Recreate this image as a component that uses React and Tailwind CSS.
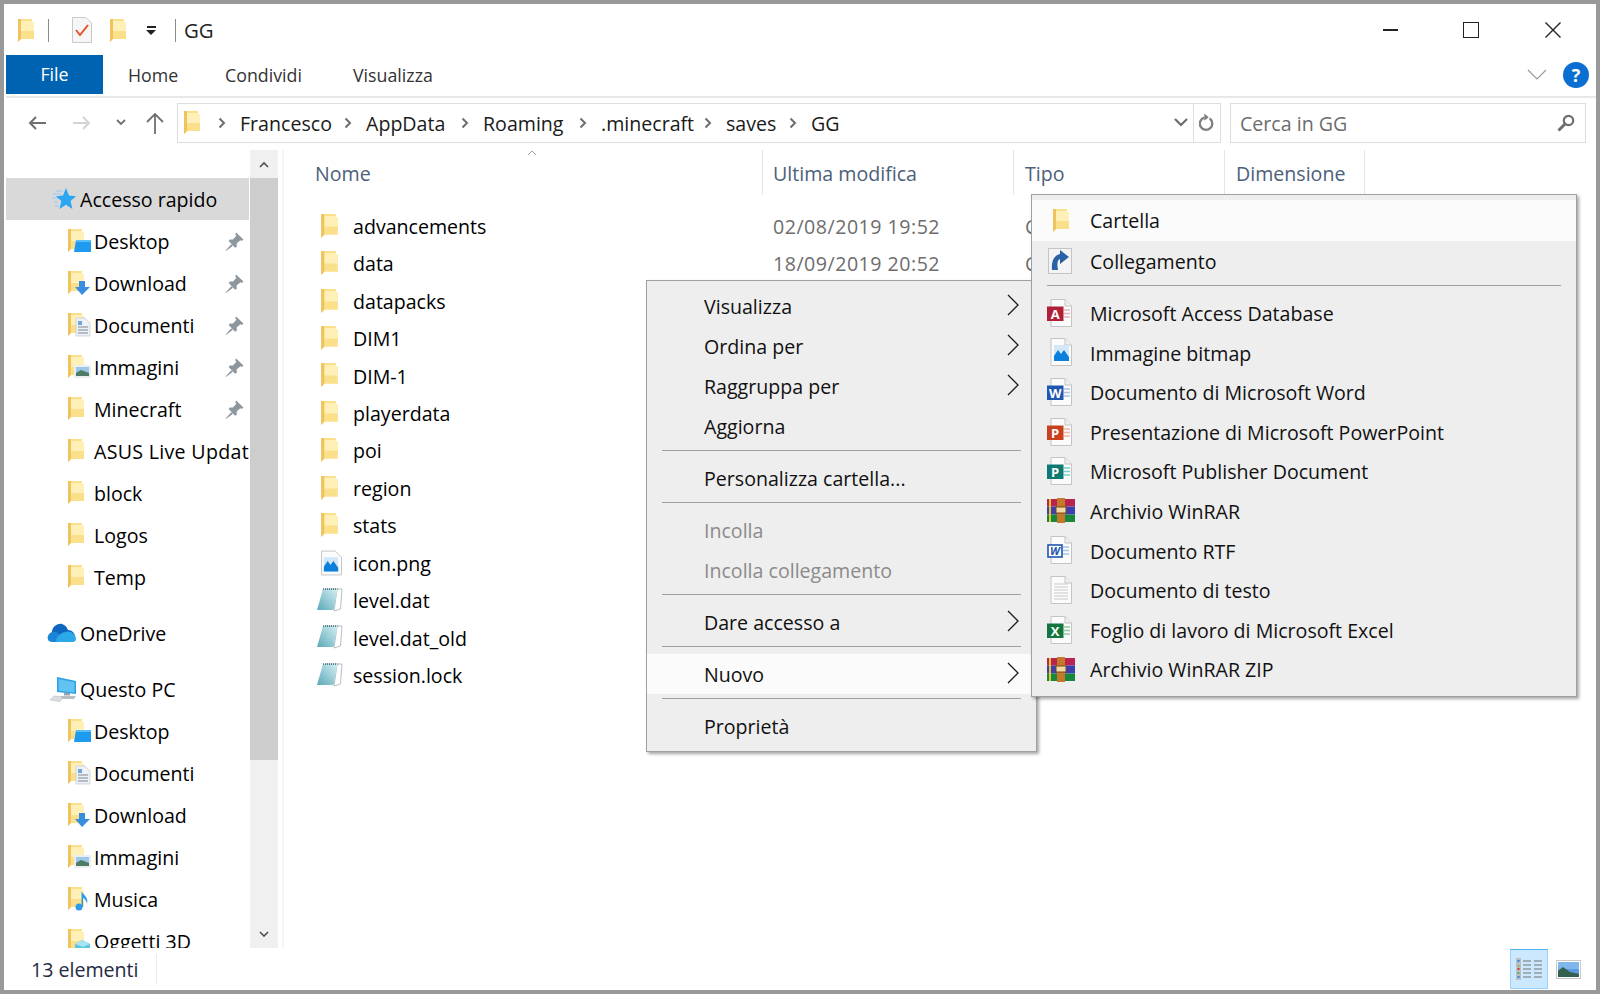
import React from 'react';

const FONT = "font-['Open_Sans','Noto_Sans',sans-serif]";

function FolderShape() {
  return (
    <>
      <path d="M0 0H14V3H16V20H3L0 23Z" fill="#fbe08c" />
      <path d="M3 2H14V3H16V12H3Z" fill="#fff0b8" />
      <path d="M0 0H3V20L0 23Z" fill="#efc45f" />
    </>
  );
}

// plain yellow folder
function Folder({ className = 'w-4 h-[23px]' }) {
  return (
    <svg viewBox="0 0 16 23" className={className}>
      <FolderShape />
    </svg>
  );
}

// folder with a small badge in the corner, used in the sidebar
function BadgeFolder({ kind }) {
  return (
    <svg viewBox="0 0 24 24" className="w-6 h-6 shrink-0">
      <FolderShape />
      {kind === 'desktop' && (
        <>
          <path d="M8 11H23V23H6Z" fill="#1e9bf0" />
          <path d="M8 11H23V13H8Z" fill="#58bdf7" />
        </>
      )}
      {kind === 'download' && <path d="M11 10H17V16H22L14 24L7 16H11Z" fill="#3a8ee0" />}
      {kind === 'docs' && (
        <>
          <path d="M8 5H17L22 10V23H8Z" fill="#eef1f5" stroke="#c3c8cf" strokeWidth="0.7" />
          <path d="M10 8H14V12H10Z" fill="#6ea8dc" />
          <path d="M10 14H20M10 17H20M10 20H20" stroke="#7d8792" strokeWidth="1" />
        </>
      )}
      {kind === 'pics' && (
        <>
          <path d="M6 10H23V23H6Z" fill="#eceff2" />
          <path d="M8 12H21V21H8Z" fill="#9cc7e8" />
          <path d="M8 18L13 15L21 18V21H8Z" fill="#4f7a63" />
        </>
      )}
      {kind === 'music' && (
        <>
          <circle cx="11" cy="20" r="3.5" fill="#2e9bea" />
          <path d="M13.5 20V4C15 8 21 10 19 17C18.5 13 16 11.5 15 11V20Z" fill="#2e9bea" />
        </>
      )}
      {kind === '3d' && (
        <>
          <path d="M7 15L14 11L22 15V23H7Z" fill="#59c6de" />
          <path d="M7 15L14 11L22 15L15 18Z" fill="#a8e4f0" />
        </>
      )}
    </svg>
  );
}

function Pin() {
  return (
    <svg viewBox="0 0 18 18" className="w-[19px] h-[19px] shrink-0">
      <path d="M10.5 0.5L17.5 7L15.8 8.5L14.6 7.8L11 11L11.2 14L9.5 15L3.5 8.5L4.6 7L7.5 7.2L10.8 3.6L9.6 2.2Z" fill="#8e969d" />
      <path d="M6 11.5L0.5 17.5L1.2 17.8L7.5 13Z" fill="#8e969d" />
    </svg>
  );
}

function Star() {
  return (
    <svg viewBox="0 0 24 22" className="w-6 h-[22px] shrink-0">
      <path d="M4 3H11M1 6H9M0 10H6M2 14H6M3 18H7" stroke="#8fcdf6" strokeWidth="1" />
      <path d="M14 0L17 7.5L24 8.2L18.6 13L20.4 21L14 16.8L7.5 21L9.3 13L4 8.2L11 7.5Z" fill="#2ba6f2" />
    </svg>
  );
}

function Cloud() {
  return (
    <svg viewBox="0 0 29 20" className="w-[29px] h-5 shrink-0">
      <path d="M5 8C6 3 11 0 15 1C18 2 20 4 21 7C25 7 28 10 28 14H5Z" fill="#0e66c0" />
      <path d="M5 19C1 19 0 15 1 13C2 10 5 8 9 9L17 14L21 19Z" fill="#1b84d6" />
      <path d="M10 19C7 16 13 10 18 9C23 7 29 11 29 16C29 18 27 19 26 19Z" fill="#2ba8e8" />
    </svg>
  );
}

function Computer() {
  return (
    <svg viewBox="0 0 26 25" className="w-[26px] h-[25px] shrink-0">
      <path d="M7 0L26 4V17L7 15Z" fill="#2f9fe6" />
      <path d="M8.5 2L24.5 5.3V15.5L8.5 13.8Z" fill="#62c3f3" />
      <path d="M14 16H20V18.5H14Z" fill="#9aa3ab" />
      <path d="M11 19H26L24 22H9Z" fill="#b9bec4" />
      <path d="M4 19L13 20L10 24.5L0 23Z" fill="#dadde0" stroke="#aeb3b8" strokeWidth="0.5" />
    </svg>
  );
}

function PageBase({ children }) {
  return (
    <svg viewBox="0 0 26 28" className="w-[26px] h-[28px]">
      <path d="M4 0.5H18L24.5 7V27.5H4Z" fill="#fbfbfb" stroke="#c4c4c4" />
      <path d="M18 0.5V7H24.5" fill="#efefef" stroke="#c4c4c4" />
      {children}
    </svg>
  );
}

function OfficeIcon({ color, letter, light }) {
  return (
    <PageBase>
      <path d="M17 11H23M17 14.5H23M17 18H23" stroke={light} strokeWidth="1.6" />
      <rect x="0" y="7.5" width="16.5" height="14.5" fill={color} />
      <text x="8.2" y="19.5" textAnchor="middle" fontSize="13" fontWeight="700" fontFamily="Open Sans, sans-serif" fill="#fff">
        {letter}
      </text>
    </PageBase>
  );
}

function BitmapIcon() {
  return (
    <PageBase>
      <rect x="7" y="7" width="15" height="16" fill="#d2e8fa" />
      <path d="M7 23V18L11 12L14 16L17 12L22 19V23Z" fill="#0a7fdc" />
    </PageBase>
  );
}

function RtfIcon() {
  return (
    <PageBase>
      <path d="M16 11H22M16 14.5H22M16 18H22" stroke="#a9c4e8" strokeWidth="1.6" />
      <rect x="1" y="9" width="14" height="12" fill="#fff" stroke="#1f56b0" strokeWidth="1.6" />
      <text x="8" y="19" textAnchor="middle" fontSize="11" fontWeight="700" fontStyle="italic" fontFamily="Open Sans, sans-serif" fill="#1f56b0">
        W
      </text>
    </PageBase>
  );
}

function TextIcon() {
  return (
    <PageBase>
      <path d="M7 8H21M7 11H21M7 14H21M7 17H21M7 20H21M7 23H21" stroke="#c9c9c9" strokeWidth="1.2" />
    </PageBase>
  );
}

function ShortcutIcon() {
  return (
    <svg viewBox="0 0 26 28" className="w-[26px] h-[28px]">
      <rect x="1.5" y="1.5" width="23" height="25" fill="#f4f4f4" stroke="#c4c4c4" />
      <path d="M5 23C4 13 8 8 13 7V3L22 10L13 17V12C10 13 10 18 11 23Z" fill="#2a62a8" />
    </svg>
  );
}

function RarIcon() {
  return (
    <svg viewBox="0 0 28 25" className="w-7 h-[25px]">
      <rect x="0" y="1" width="28" height="7.5" fill="#b9234f" />
      <rect x="0" y="8.5" width="28" height="8" fill="#3b3fb0" />
      <rect x="0" y="16.5" width="28" height="7.5" fill="#17873c" />
      <rect x="2" y="1" width="2" height="23" fill="#e9c62f" />
      <rect x="10" y="0" width="8" height="25" fill="#c4792a" />
      <rect x="9" y="9" width="10" height="6" fill="#f0d9a8" stroke="#7c4a14" />
    </svg>
  );
}

function NotepadIcon() {
  return (
    <svg viewBox="0 0 26 24" className="w-[26px] h-6">
      <defs>
        <linearGradient id="padCover" x1="0" y1="1" x2="1" y2="0">
          <stop offset="0" stopColor="#5aa8b8" />
          <stop offset="1" stopColor="#d6f0f4" />
        </linearGradient>
      </defs>
      <path d="M8 1H25L23.5 21L17 23L20 2Z" fill="#fff" stroke="#9aa5aa" strokeWidth="0.7" />
      <path d="M6 1H20.5L16.5 22H0Z" fill="url(#padCover)" />
      <path d="M6 1.2H20.5" stroke="#4c7a86" strokeWidth="1.8" strokeDasharray="1 1" />
    </svg>
  );
}

function MenuArrow() {
  return (
    <svg viewBox="0 0 12 22" className="w-3 h-[22px]">
      <path d="M1 1L11 11L1 21" fill="none" stroke="#1c1c1c" strokeWidth="1.3" />
    </svg>
  );
}

function Crumb({ label, width }) {
  return (
    <div className="flex items-center shrink-0" style={{ width }}>
      <svg viewBox="0 0 8 12" className="w-2 h-3 shrink-0">
        <path d="M1.5 1.5L6 6L1.5 10.5" fill="none" stroke="#6d6d6d" strokeWidth="2" />
      </svg>
      <span className="ml-[14px] pt-[2px] text-[#1a1a1a]">{label}</span>
    </div>
  );
}

function SideRow({ icon, label, pinned, wide }) {
  return (
    <div className="flex items-center h-[42px] shrink-0 pl-[62px]">
      {icon}
      <span className={`ml-[2px] pt-[2px] whitespace-nowrap text-black ${wide ? 'tracking-[0.3px]' : ''}`}>{label}</span>
      {pinned && (
        <div className="ml-auto mr-[5px]">
          <Pin />
        </div>
      )}
    </div>
  );
}

function SideRoot({ icon, label, active }) {
  return (
    <div className={`flex items-center h-[42px] shrink-0 ${active ? 'bg-[#d9d9d9]' : ''}`}>
      <div className="flex justify-end shrink-0 w-[70px]">{icon}</div>
      <span className="ml-[4px] pt-[2px] whitespace-nowrap text-black">{label}</span>
    </div>
  );
}

function FileRow({ icon, name, date }) {
  return (
    <div className="flex items-center h-[37.43px] shrink-0">
      <div className="w-[33px] flex justify-start shrink-0">{icon}</div>
      <span className="w-[420px] pt-[2px] shrink-0 text-black">{name}</span>
      {date && <span className="w-[252px] pt-[2px] shrink-0 text-[#6d6d6d] tracking-[0.5px]">{date}</span>}
      {date && <span className="text-[#6d6d6d] pt-[2px] whitespace-nowrap">Cartella di file</span>}
    </div>
  );
}

function MenuItem({ label, arrow, disabled, active }) {
  return (
    <div className={`flex items-center h-[40px] pl-[57px] pr-[17px] ${active ? 'bg-[#fbfbfb]' : ''}`}>
      <span className={`pt-[2px] ${disabled ? 'text-[#8b8b8b]' : 'text-[#111]'}`}>{label}</span>
      {arrow && (
        <div className="ml-auto flex mb-[3px]">
          <MenuArrow />
        </div>
      )}
    </div>
  );
}

function Sep() {
  return (
    <div className="h-[12px] pt-[4px]">
      <div className="h-px bg-[#a0a0a0] mx-[15px]" />
    </div>
  );
}

function NewItem({ icon, label, active, tall }) {
  return (
    <div className={`flex items-center pl-[15px] ${tall ? 'h-[40.5px]' : 'h-[39.6px]'} ${active ? 'bg-[#fbfbfb]' : ''}`}>
      <div className="w-[43px] shrink-0 flex">{icon}</div>
      <span className="pt-[2px] text-[#111] whitespace-nowrap">{label}</span>
    </div>
  );
}

const FILES = [
  ['advancements', '02/08/2019 19:52'],
  ['data', '18/09/2019 20:52'],
  ['datapacks'],
  ['DIM1'],
  ['DIM-1'],
  ['playerdata'],
  ['poi'],
  ['region'],
  ['stats'],
];

export default function App() {
  const pageIcon = (
    <div className="ml-[1px]">
      <svg viewBox="0 0 22 26" className="w-[21px] h-[26px]">
        <path d="M0.5 0.5H15L21.5 7V25.5H0.5Z" fill="#fbfbfb" stroke="#c4c4c4" />
        <rect x="3" y="7" width="15" height="15" fill="#d2e8fa" />
        <path d="M3 22V17L7 11L10 15L13 11L18 18V22Z" fill="#0a7fdc" />
      </svg>
    </div>
  );
  const padIcon = (
    <div className="ml-[-3px]">
      <NotepadIcon />
    </div>
  );

  return (
    <div className={`relative w-[1600px] h-[994px] bg-[#999999] p-1 overflow-hidden text-[19.6px] leading-none ${FONT}`}>
      <div className="flex flex-col w-full h-full bg-white">
        {/* title bar */}
        <div className="flex items-center h-[51px] shrink-0 pl-[14px] pt-[1px]">
          <Folder />
          <div className="ml-[14px] w-px h-[23px] bg-[#8a8a8a]" />
          <div className="ml-[23px]">
            <svg viewBox="0 0 20 26" className="w-5 h-[26px]">
              <path d="M0.5 0.5H14L19.5 6V25.5H0.5Z" fill="#f6f6f6" stroke="#c9c9c9" />
              <path d="M4 13L8 18L16 8" fill="none" stroke="#e8502a" strokeWidth="2" />
            </svg>
          </div>
          <div className="ml-[18px]">
            <Folder />
          </div>
          <div className="ml-[20px] flex flex-col items-center gap-[2px]">
            <div className="w-[9px] h-[2px] bg-[#222]" />
            <div className="w-0 h-0 border-x-[5px] border-x-transparent border-t-[5px] border-t-[#222]" />
          </div>
          <div className="ml-[19px] w-px h-[23px] bg-[#8a8a8a]" />
          <span className="ml-2 text-[#222] text-[20.4px]">GG</span>
          <div className="ml-auto flex items-center pr-[35px]">
            <div className="w-[15px] h-[2px] bg-[#222]" />
            <div className="ml-[65px] w-4 h-4 border-[1.5px] border-[#222]" />
            <svg viewBox="0 0 16 16" className="ml-[66px] w-4 h-4">
              <path d="M0.5 0.5L15.5 15.5M15.5 0.5L0.5 15.5" stroke="#222" strokeWidth="1.4" />
            </svg>
          </div>
        </div>

        {/* ribbon tabs */}
        <div className="flex items-stretch h-[39px] shrink-0 pl-[2px] text-[#333] text-[17.8px]">
          <div className="w-[97px] flex items-center justify-center bg-[#0063b1] text-white">File</div>
          <span className="ml-[25px] w-[97px] self-center pt-[2px]">Home</span>
          <span className="w-[128px] self-center pt-[2px]">Condividi</span>
          <span className="self-center pt-[2px]">Visualizza</span>
          <div className="ml-auto flex items-center pr-[7px]">
            <svg viewBox="0 0 20 11" className="w-5 h-[11px]">
              <path d="M1 1L10 10L19 1" fill="none" stroke="#9a9a9a" strokeWidth="1.2" />
            </svg>
            <div className="ml-4 w-[26px] h-[26px] rounded-full bg-[#0a6fd0] flex items-center justify-center text-white text-[18px] font-bold">?</div>
          </div>
        </div>
        <div className="h-[2px] mt-[2px] ml-[2px] bg-[#e8e8e8] shrink-0" />

        {/* navigation row */}
        <div className="flex items-center h-[52px] shrink-0 pb-[3px]">
          <svg viewBox="0 0 18 14" className="ml-[24px] w-[18px] h-[14px]">
            <path d="M18 7H2M8 1L2 7L8 13" fill="none" stroke="#707070" strokeWidth="2" />
          </svg>
          <svg viewBox="0 0 18 14" className="ml-[27px] w-[18px] h-[14px]">
            <path d="M0 7H16M10 1L16 7L10 13" fill="none" stroke="#d4d4d4" strokeWidth="2" />
          </svg>
          <svg viewBox="0 0 10 7" className="ml-[25px] w-[10px] h-[7px]">
            <path d="M1 1L5 5L9 1" fill="none" stroke="#707070" strokeWidth="1.8" />
          </svg>
          <svg viewBox="0 0 18 22" className="ml-[20px] w-[18px] h-[22px]">
            <path d="M9 22V2M1 10L9 2L17 10" fill="none" stroke="#707070" strokeWidth="1.8" />
          </svg>
          <div className="ml-[13px] w-[1044px] h-[40px] border border-[#dedede] flex items-center shrink-0 pl-[6px]">
            <Folder />
            <div className="ml-[18px] flex items-center">
              <Crumb label="Francesco" width="126px" />
              <Crumb label="AppData" width="117px" />
              <Crumb label="Roaming" width="118px" />
              <Crumb label=".minecraft" width="125px" />
              <Crumb label="saves" width="85px" />
              <Crumb label="GG" width="60px" />
            </div>
            <svg viewBox="0 0 14 9" className="ml-auto mr-[5px] w-[14px] h-[9px]">
              <path d="M1 1L7 7L13 1" fill="none" stroke="#6d6d6d" strokeWidth="2.2" />
            </svg>
            <div className="w-px h-full bg-[#dedede]" />
            <svg viewBox="0 0 18 20" className="mx-[5px] w-[16px] h-[19px]">
              <path d="M12 5.5A7 7 0 1 1 6 4.5" fill="none" stroke="#808080" strokeWidth="2.6" />
              <path d="M6 0V8L11 4Z" fill="#808080" />
            </svg>
          </div>
          <div className="ml-[9px] w-[356px] h-[40px] border border-[#dedede] flex items-center pl-[9px] pr-[10px] shrink-0">
            <span className="pt-[2px] text-[#6d6d6d]">Cerca in GG</span>
            <svg viewBox="0 0 18 18" className="ml-auto w-[18px] h-[18px]">
              <circle cx="11.5" cy="6.5" r="4.7" fill="none" stroke="#6d6d6d" strokeWidth="2.2" />
              <path d="M8 10L1.5 16.5" stroke="#6d6d6d" strokeWidth="3" />
            </svg>
          </div>
        </div>

        {/* body */}
        <div className="flex flex-1 min-h-0">
          {/* sidebar */}
          <div className="w-[243px] ml-[2px] shrink-0 flex flex-col overflow-hidden pt-[28px]">
            <SideRoot active icon={<Star />} label="Accesso rapido" />
            <SideRow icon={<BadgeFolder kind="desktop" />} label="Desktop" pinned />
            <SideRow icon={<BadgeFolder kind="download" />} label="Download" pinned />
            <SideRow icon={<BadgeFolder kind="docs" />} label="Documenti" pinned />
            <SideRow icon={<BadgeFolder kind="pics" />} label="Immagini" pinned />
            <SideRow icon={<BadgeFolder />} label="Minecraft" pinned />
            <SideRow wide icon={<BadgeFolder />} label="ASUS Live Update" />
            <SideRow icon={<BadgeFolder />} label="block" />
            <SideRow icon={<BadgeFolder />} label="Logos" />
            <SideRow icon={<BadgeFolder />} label="Temp" />
            <div className="h-[14px] shrink-0" />
            <SideRoot icon={<Cloud />} label="OneDrive" />
            <div className="h-[14px] shrink-0" />
            <SideRoot icon={<Computer />} label="Questo PC" />
            <SideRow icon={<BadgeFolder kind="desktop" />} label="Desktop" />
            <SideRow icon={<BadgeFolder kind="docs" />} label="Documenti" />
            <SideRow icon={<BadgeFolder kind="download" />} label="Download" />
            <SideRow icon={<BadgeFolder kind="pics" />} label="Immagini" />
            <SideRow icon={<BadgeFolder kind="music" />} label="Musica" />
            <SideRow icon={<BadgeFolder kind="3d" />} label="Oggetti 3D" />
          </div>

          {/* sidebar scrollbar */}
          <div className="w-[28px] ml-px shrink-0 flex flex-col bg-[#f0f0f0]">
            <div className="h-[28px] flex items-center justify-center">
              <svg viewBox="0 0 10 7" className="w-[10px] h-[7px]">
                <path d="M1 6L5 2L9 6" fill="none" stroke="#505050" strokeWidth="1.6" />
              </svg>
            </div>
            <div className="h-[582px] bg-[#cdcdcd]" />
            <div className="mt-auto h-[28px] flex items-center justify-center">
              <svg viewBox="0 0 10 7" className="w-[10px] h-[7px]">
                <path d="M1 1L5 5L9 1" fill="none" stroke="#505050" strokeWidth="1.6" />
              </svg>
            </div>
          </div>
          <div className="w-[2px] ml-[4px] shrink-0 bg-[#f5f5f5]" />

          {/* file list */}
          <div className="relative flex-1 min-w-0 flex flex-col">
            <div className="flex h-[45px] shrink-0 text-[#4c607a]">
              <div className="relative w-[479px] pl-[31px] pt-[2px] flex items-center border-r border-[#e5e5e5]">
                Nome
                <svg viewBox="0 0 10 6" className="absolute left-[243px] top-0 w-[10px] h-[6px]">
                  <path d="M1 5L5 1L9 5" fill="none" stroke="#a0a0a0" strokeWidth="1" />
                </svg>
              </div>
              <div className="w-[251px] pl-[10px] pt-[2px] flex items-center border-r border-[#e5e5e5]">Ultima modifica</div>
              <div className="w-[211px] pl-[11px] pt-[2px] flex items-center border-r border-[#e5e5e5]">Tipo</div>
              <div className="w-[140px] pl-[11px] pt-[2px] flex items-center border-r border-[#e5e5e5]">Dimensione</div>
            </div>
            <div className="flex flex-col pl-[36px] pt-[12px]">
              {FILES.map(([name, date]) => (
                <FileRow key={name} icon={<div className="ml-[1px]"><Folder className="w-[17px] h-[24px]" /></div>} name={name} date={date} />
              ))}
              <FileRow icon={pageIcon} name="icon.png" />
              <FileRow icon={padIcon} name="level.dat" />
              <FileRow icon={padIcon} name="level.dat_old" />
              <FileRow icon={padIcon} name="session.lock" />
            </div>
          </div>
        </div>

        {/* status bar */}
        <div className="flex items-center h-[42px] shrink-0">
          <span className="ml-[27px] w-[125px] pt-[2px] text-[#1f2a44]">13 elementi</span>
          <div className="w-px h-[30px] bg-[#ececec]" />
          <div className="ml-auto flex items-center pr-[15px]">
            <div className="w-[38px] h-[40px] bg-[#cce8ff] border border-[#99d1ff] border-t-[#4fb0ee] flex items-center justify-center">
              <svg viewBox="0 0 26 22" className="w-[26px] h-[22px]">
                <rect x="0" y="0" width="5" height="22" fill="#b8bfc5" />
                <path d="M1.5 3H3.5" stroke="#3b7fd0" strokeWidth="2" />
                <path d="M1.5 8H3.5" stroke="#b0a060" strokeWidth="2" />
                <path d="M1.5 11H3.5" stroke="#d8352a" strokeWidth="2" />
                <path d="M1.5 15H3.5" stroke="#6aa84f" strokeWidth="2" />
                <path d="M1.5 19H3.5" stroke="#3b7fd0" strokeWidth="2" />
                <path d="M7 3H15M18 3H26M7 7H15M18 7H26M7 11H15M18 11H26M7 15H15M18 15H26M7 19H15M18 19H26" stroke="#8d9aa3" strokeWidth="1.4" />
              </svg>
            </div>
            <svg viewBox="0 0 25 19" className="ml-[8px] w-[25px] h-[19px]">
              <rect x="0.5" y="0.5" width="24" height="18" fill="#fff" stroke="#c8c8c8" />
              <rect x="2" y="2" width="21" height="15" fill="#5a9be0" />
              <path d="M2 9H23V2H2Z" fill="#7fb6ec" />
              <path d="M2 17V11L7 7L14 12L23 14V17Z" fill="#35604f" />
            </svg>
          </div>
        </div>
      </div>

      {/* context menu */}
      <div className="absolute left-[646px] top-[280px] w-[391px] h-[472px] pt-[5px] bg-[#eeeeee] border border-[#a0a0a0] shadow-[2px_2px_3px_rgba(0,0,0,0.35)]">
        <MenuItem label="Visualizza" arrow />
        <MenuItem label="Ordina per" arrow />
        <MenuItem label="Raggruppa per" arrow />
        <MenuItem label="Aggiorna" />
        <Sep />
        <MenuItem label="Personalizza cartella..." />
        <Sep />
        <MenuItem label="Incolla" disabled />
        <MenuItem label="Incolla collegamento" disabled />
        <Sep />
        <MenuItem label="Dare accesso a" arrow />
        <Sep />
        <MenuItem label="Nuovo" arrow active />
        <Sep />
        <MenuItem label="Proprietà" />
      </div>

      {/* "Nuovo" submenu */}
      <div className="absolute left-[1031px] top-[194px] w-[546px] h-[503px] pt-[5px] bg-[#eeeeee] border border-[#a0a0a0] shadow-[2px_2px_3px_rgba(0,0,0,0.35)]">
        <NewItem tall active icon={<div className="ml-[6px]"><Folder className="w-4 h-[23px]" /></div>} label="Cartella" />
        <NewItem tall icon={<ShortcutIcon />} label="Collegamento" />
        <Sep />
        <NewItem icon={<OfficeIcon color="#b01e38" letter="A" light="#e7b2bd" />} label="Microsoft Access Database" />
        <NewItem icon={<BitmapIcon />} label="Immagine bitmap" />
        <NewItem icon={<OfficeIcon color="#1f56b0" letter="W" light="#a9c4e8" />} label="Documento di Microsoft Word" />
        <NewItem icon={<OfficeIcon color="#c8401c" letter="P" light="#f2b6a4" />} label="Presentazione di Microsoft PowerPoint" />
        <NewItem icon={<OfficeIcon color="#0c7a72" letter="P" light="#77cfc6" />} label="Microsoft Publisher Document" />
        <NewItem icon={<RarIcon />} label="Archivio WinRAR" />
        <NewItem icon={<RtfIcon />} label="Documento RTF" />
        <NewItem icon={<TextIcon />} label="Documento di testo" />
        <NewItem icon={<OfficeIcon color="#14763e" letter="X" light="#8fcaa5" />} label="Foglio di lavoro di Microsoft Excel" />
        <NewItem icon={<RarIcon />} label="Archivio WinRAR ZIP" />
      </div>
    </div>
  );
}
